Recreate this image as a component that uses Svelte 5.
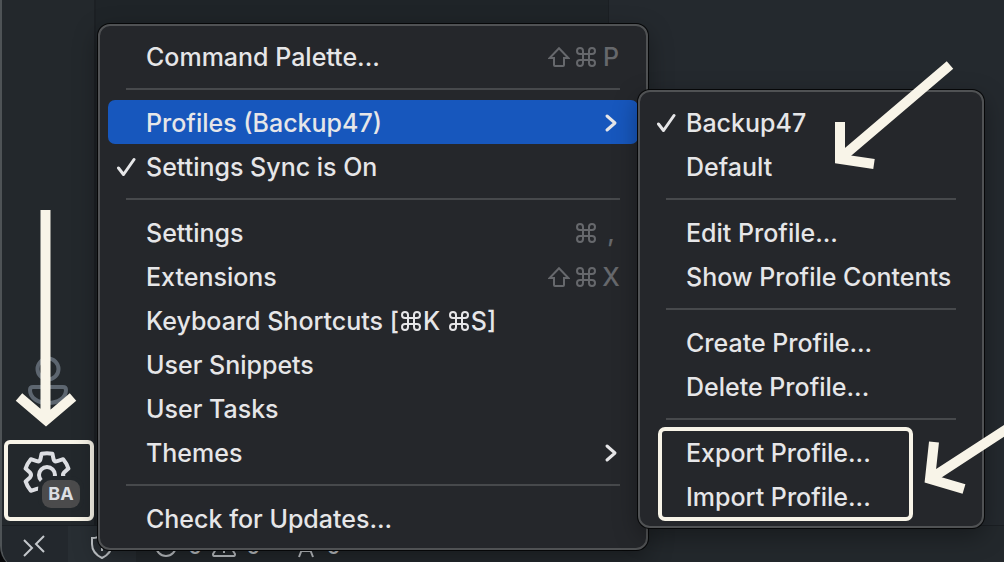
<script>
  const mainMenu = [
    [{ label: 'Command Palette...', keys: ['shift', 'cmd', 'P'] }],
    [
      { label: 'Profiles (Backup47)', sub: true, active: true },
      { label: 'Settings Sync is On', checked: true }
    ],
    [
      { label: 'Settings', keys: ['cmd', ','] },
      { label: 'Extensions', keys: ['shift', 'cmd', 'X'] },
      { label: 'Keyboard Shortcuts [⌘K ⌘S]', parts: ['Keyboard Shortcuts [', 'cmd', 'K ', 'cmd', 'S]'] },
      { label: 'User Snippets' },
      { label: 'User Tasks' },
      { label: 'Themes', sub: true }
    ],
    [{ label: 'Check for Updates...' }]
  ];
  const profileMenu = [
    [{ label: 'Backup47', checked: true }, { label: 'Default' }],
    [{ label: 'Edit Profile...' }, { label: 'Show Profile Contents' }],
    [{ label: 'Create Profile...' }, { label: 'Delete Profile...' }],
    [{ label: 'Export Profile...' }, { label: 'Import Profile...' }]
  ];
</script>

{#snippet cmd()}
  <svg class="cmd" viewBox="0 0 20 20" aria-label="Command"><path d="M7 7V4a3 3 0 1 0-3 3h12a3 3 0 1 0-3-3v12a3 3 0 1 0 3-3H4a3 3 0 1 0 3 3V7" /></svg>
{/snippet}

{#snippet menu(groups, name)}
  <div class="menu {name}" role="menu">
    {#each groups as group, i}
      {#if i > 0}<hr />{/if}
      {#each group as item}
        <button class="item" class:active={item.active} role="menuitem">
          <span class="check">
            {#if item.checked}
              <svg width="20" height="20" viewBox="0 0 20 20"><path d="M2.5 11 7.5 17.5 18 2.5" /></svg>
            {/if}
          </span>
          <span class="label">
            {#if item.parts}
              {#each item.parts as part}{#if part === 'cmd'}{@render cmd()}{:else}{part}{/if}{/each}
            {:else}{item.label}{/if}
          </span>
          {#if item.keys}
            <span class="keys">
              {#each item.keys as key}
                {#if key === 'cmd'}{@render cmd()}
                {:else if key === 'shift'}
                  <svg class="shift" viewBox="0 0 22 20" aria-label="Shift"><path d="M11 1.2 20.4 11H16v7q0 1-1 1H7q-1 0-1-1v-7H1.6Z" /></svg>
                {:else}<span class="key">{key}</span>{/if}
              {/each}
            </span>
          {/if}
          {#if item.sub}
            <svg class="chevron" width="16" height="20" viewBox="0 0 16 20"><path d="m3 3 8 7-8 7" /></svg>
          {/if}
        </button>
      {/each}
    {/each}
  </div>
{/snippet}

<div class="page">
  <div class="window">
    <div class="body">
      <nav class="activity">
        <button class="account" aria-label="Accounts">
          <svg width="44" height="50" viewBox="0 0 44 50"><circle cx="22" cy="13" r="10.5" /><path d="M7 31h30q3 0 3 3c0 8-8 13-18 13S4 42 4 34q0-3 3-3Z" /></svg>
        </button>
        <button class="manage" aria-label="Manage">
          <svg width="48" height="48" viewBox="0 0 48 48">
            <path d="M18.6 2.7Q24 1.7 29.4 2.7L30.6 8.4Q31.4 11 34.2 10.2L40.2 8.2Q43.8 12.4 45.4 17.6L41 21.6Q39 24 41 26.4L45.4 30.4Q43.8 35.6 40.2 39.8L34.2 37.8Q31.4 37 30.6 39.6L29.4 45.3Q24 46.3 18.6 45.3L17.4 39.6Q16.6 37 13.8 37.8L7.8 39.8Q4.2 35.6 2.6 30.4L7 26.4Q9 24 7 21.6L2.6 17.6Q4.2 12.4 7.8 8.2L13.8 10.2Q16.6 11 17.4 8.4Z" />
            <circle cx="24" cy="24" r="8" />
          </svg>
          <span class="badge">BA</span>
        </button>
      </nav>
      <aside class="sidebar"></aside>
      <main class="editor"></main>
    </div>
    <footer class="status">
      <button class="remote" aria-label="Remote window">
        <svg width="24" height="22" viewBox="0 0 24 22"><path d="m2 5 8 8-8 8M22 1l-8 8 8 8" /></svg>
      </button>
      <button class="trust" aria-label="Restricted mode">
        <svg width="24" height="26" viewBox="0 0 24 26"><path d="M12 2q4 3 10 3v6q0 9-10 14Q2 20 2 11V5q6 0 10-3ZM12 8v5m0 2v3" /></svg>
      </button>
      <button class="problems">
        <svg width="24" height="24" viewBox="0 0 24 24"><circle cx="12" cy="12" r="10" /></svg>0
        <svg width="24" height="24" viewBox="0 0 24 24"><path d="M12 2 23 20q0 2-1 2H2q-1 0-1-2ZM12 9v6m0 2v2" /></svg>0
      </button>
      <button class="ports">
        <svg width="20" height="24" viewBox="0 0 20 24"><path d="m10 5-7 18M10 5l7 18M5 17h10" /></svg>0
      </button>
    </footer>
  </div>

  {@render menu(mainMenu, 'main')}
  {@render menu(profileMenu, 'profiles')}

  <div class="frame"></div>
  <svg class="arrows" width="1004" height="562" viewBox="0 0 1004 562">
    <path d="M45.5 210V418M19 397l27 23 27-23" />
    <path d="M950 65 842 157M840 122v37l34 5" />
    <path d="M1010 427 930 479M934 442l-4 37 34 10" />
  </svg>
</div>

<style>
  :global(body) { margin: 0; background: #08090b; }
  .page {
    position: relative;
    height: 100vh;
    overflow: hidden;
    font-family: Inter, sans-serif;
    font-size: 25px;
    font-weight: 500;
    color: #e6e6e8;
  }
  button {
    border: 0;
    padding: 0;
    background: none;
    color: inherit;
    font: inherit;
    text-align: left;
  }
  svg {
    fill: none;
    stroke: currentColor;
    stroke-width: 2;
    flex: none;
  }
  .window {
    box-sizing: border-box;
    height: calc(100vh + 8px);
    display: flex;
    flex-direction: column;
    border-left: 2px solid #4e5356;
    border-bottom-left-radius: 24px;
    overflow: hidden;
    background: #23282c;
  }
  .body { flex: 1; display: flex; }
  .activity {
    box-sizing: border-box;
    width: 94px;
    padding: 0 2px 4px;
    border-right: 2px solid #1c2024;
    display: flex;
    flex-direction: column;
    justify-content: flex-end;
  }
  .account {
    height: 84px;
    display: flex;
    justify-content: center;
    color: #5d6670;
  }
  .account svg { stroke-width: 4; }
  .manage {
    position: relative;
    box-sizing: border-box;
    height: 81px;
    width: 90px;
    border: 4px solid #f8f4e8;
    border-radius: 6px;
    display: flex;
    justify-content: center;
    padding: 7px 4px 0 0;
    color: #dcdee2;
  }
  .manage svg { stroke-width: 4; stroke-linejoin: round; }
  .badge {
    position: absolute;
    right: 10px;
    bottom: 9px;
    width: 38px;
    line-height: 28px;
    border-radius: 9px;
    background: #4b4b4c;
    box-shadow: 0 0 0 4px #23282c;
    font-size: 18px;
    font-weight: 700;
    text-align: center;
  }
  .sidebar { width: 512px; background: #1f2428; border-right: 1px solid #1b1f23; }
  .editor { flex: 1; background: #24292e; }
  .status {
    height: 44px;
    border-top: 1px solid #1b1f23;
    display: flex;
    align-items: center;
    color: #c4c8cc;
    font-size: 22px;
  }
  .status button { display: flex; align-items: center; gap: 10px; padding-bottom: 4px; }
  .status .remote { width: 66px; height: 100%; box-sizing: border-box; padding-right: 2px; justify-content: center; background: #23282d; }
  .status .trust { width: 68px; height: 100%; box-sizing: border-box; justify-content: center; background: #282e33; }
  .status .problems { margin-left: 18px; }
  .status .ports { margin-left: 36px; }
  .menu {
    position: absolute;
    box-sizing: border-box;
    padding: 8px;
    border: 2px solid #505254;
    border-radius: 12px;
    background: #25272b;
    box-shadow: 0 0 0 1px #060708, 0 8px 24px rgba(0, 0, 0, 0.35);
  }
  .main { left: 98px; top: 24px; width: 550px; }
  .profiles { left: 638px; top: 90px; width: 346px; }
  .item {
    display: flex;
    align-items: center;
    width: 100%;
    height: 44px;
    padding: 2px 18px 0 0;
    border-radius: 7px;
    white-space: nowrap;
  }
  .active { background: #1757bd; }
  .check { width: 38px; height: 20px; flex: none; box-sizing: border-box; padding-left: 8px; }
  .check svg { display: block; stroke-width: 3; stroke-linecap: round; stroke-linejoin: round; }
  .label { flex: 1; }
  .chevron { stroke-width: 3; stroke-linecap: round; stroke-linejoin: round; }
  .cmd { width: 20px; height: 20px; }
  .label .cmd { margin: 0 2px; vertical-align: -1px; }
  .keys { display: flex; align-items: center; gap: 6px; color: #66686c; }
  .shift { width: 22px; height: 20px; }
  .key { width: 18px; text-align: center; }
  hr {
    height: 2px;
    margin: 10px 18px;
    border: 0;
    background: #47494c;
  }
  .frame {
    position: absolute;
    left: 658px;
    top: 427px;
    box-sizing: border-box;
    width: 255px;
    height: 94px;
    border: 4px solid #f8f4e8;
    border-radius: 7px;
  }
  .arrows {
    position: absolute;
    left: 0;
    top: 0;
    pointer-events: none;
    color: #f8f4e8;
    stroke-width: 10;
  }
</style>
